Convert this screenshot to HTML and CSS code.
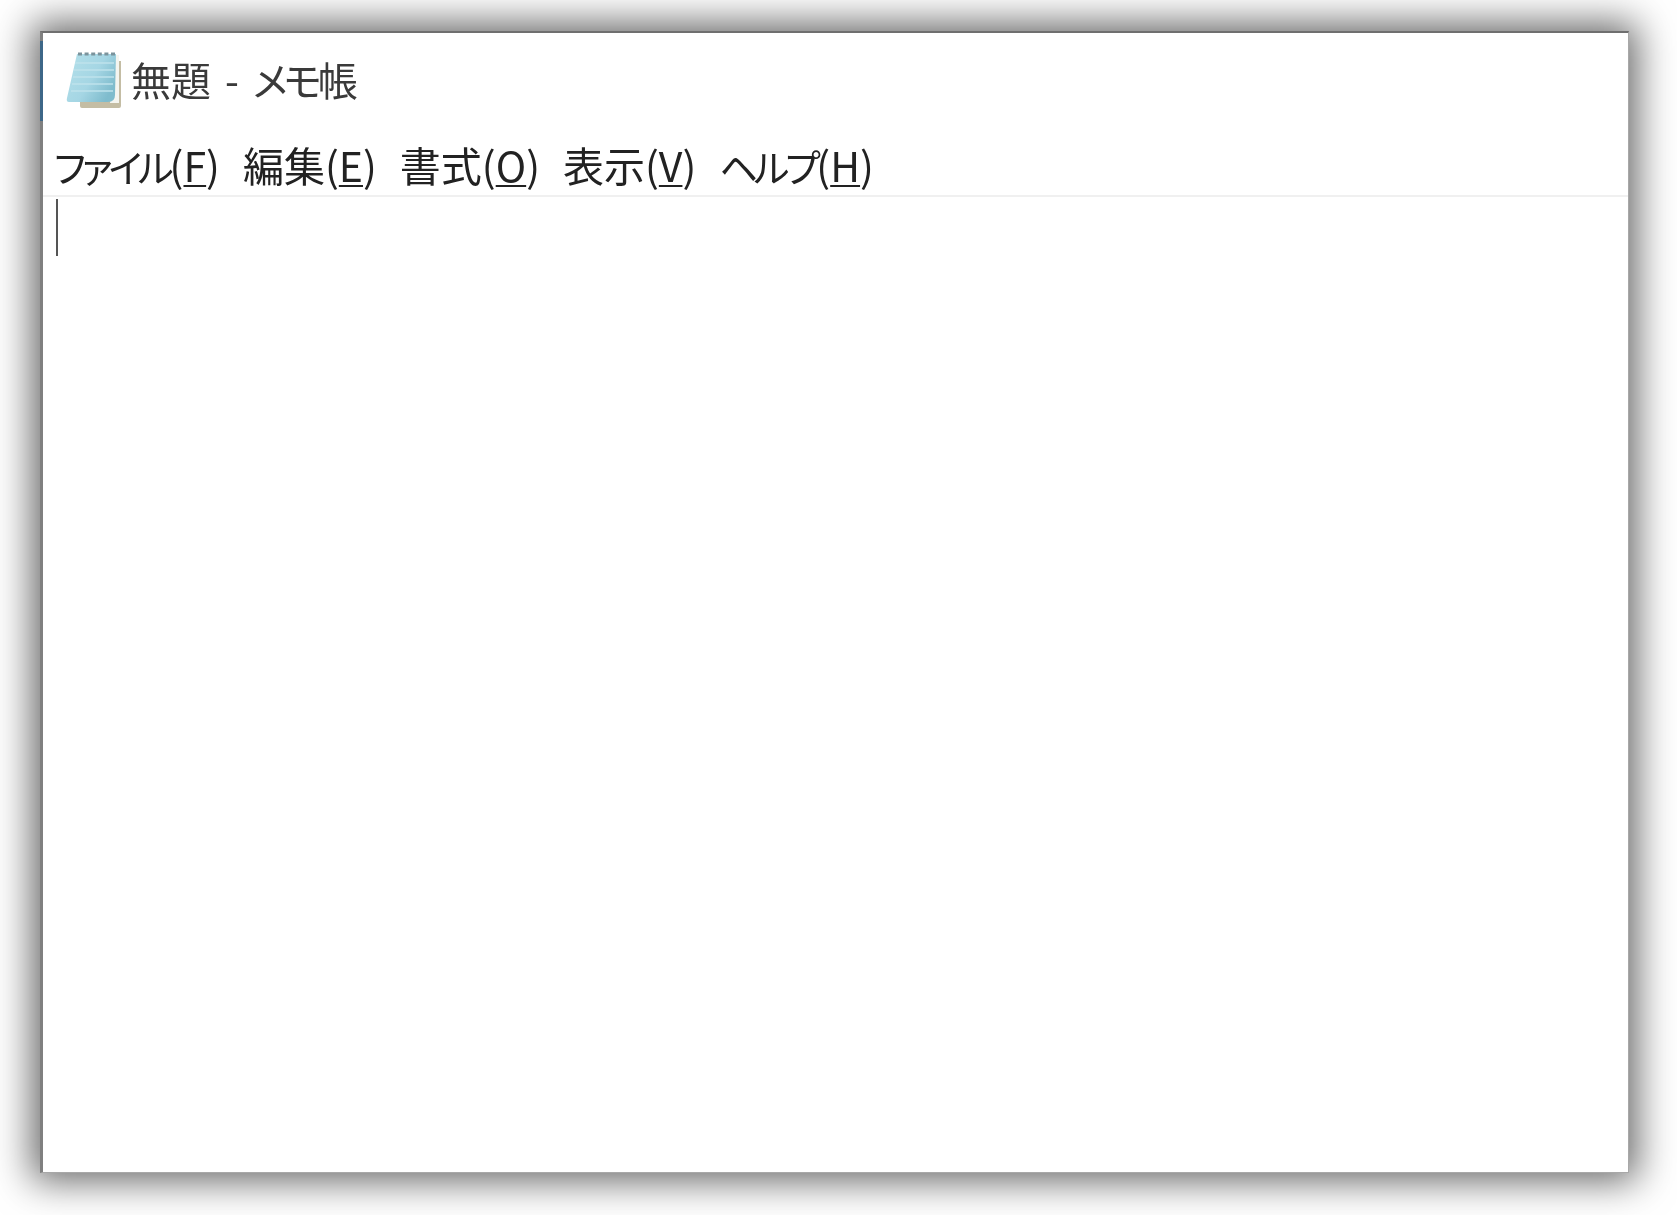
FILE: index.html
```html
<!DOCTYPE html>
<html lang="ja">
<head>
  <meta charset="UTF-8" />
  <title>無題 - メモ帳</title>
  <link rel="stylesheet" href="styles.css">
</head>
<body>
  <div class="window">
    <div class="accent"></div>

    <div class="titlebar">
      <svg class="app-icon" viewBox="0 0 56 60" aria-hidden="true">
        <defs>
          <linearGradient id="paper" x1="0" y1="0" x2="1" y2="0.6">
            <stop offset="0" stop-color="#b4e0ea" />
            <stop offset="0.6" stop-color="#a5d6e4" />
            <stop offset="1" stop-color="#7fbccd" />
          </linearGradient>
        </defs>
        <path d="M14 50 L14 57 Q14 59 16 59 L53 59 Q55 59 55 57 L55 12 L50 12 L50 50 Z" fill="#c4bda4" />
        <path d="M48 6 L53 6 L53 54 L44 54 Z" fill="#f4f5f0" />
        <path d="M11 5 L50 5 L49 46 Q49 53 42 53 L3 53 Q0 53 1 49 Z" fill="url(#paper)" />
        <path d="M9 14 H48 M8 21 H48 M7 28 H48 M6 35 H47 M5 42 H47" stroke="#bfe2eb" stroke-width="1.4" fill="none" />
        <path d="M12 5 H49" stroke="#7b939c" stroke-width="3" stroke-dasharray="4 2.6" fill="none" />
      </svg>
      <span class="title">無題 - <span class="kana">メモ</span>帳</span>
    </div>

    <nav class="menubar">
      <span class="menu-item"><span class="kana">ファイル</span>(<u>F</u>)</span>
      <span class="menu-item">編集(<u>E</u>)</span>
      <span class="menu-item">書式(<u>O</u>)</span>
      <span class="menu-item">表示(<u>V</u>)</span>
      <span class="menu-item"><span class="kana">ヘルプ</span>(<u>H</u>)</span>
    </nav>

    <div class="editor">
      <div class="caret"></div>
    </div>
  </div>
</body>
</html>
```

FILE: styles.css
```css
* {
  box-sizing: border-box;
}
body, html {
  margin: 0;
  padding: 0;
  height: 100%;
  background: #fff;
  overflow: hidden;
}
body {
  padding: 31px 48px 42px 40px;
  font-family: 'Noto Sans CJK JP', 'Liberation Sans', sans-serif;
  color: #222;
}
.window {
  position: relative;
  height: 100%;
  display: flex;
  flex-direction: column;
  background: #fff;
  border: 1px solid #a8a8a8;
  border-top: 2px solid #6f6f6f;
  border-left: 3px solid #808080;
  box-shadow: 0 0 36px 8px rgba(0, 0, 0, 0.6);
}
.accent {
  position: absolute;
  top: 8px;
  left: -3px;
  width: 3px;
  height: 80px;
  background: #3d6788;
}
.titlebar {
  height: 80px;
  flex: none;
  display: flex;
  align-items: center;
  padding: 12px 0 0 23px;
}
.app-icon {
  width: 56px;
  height: 60px;
  margin-right: 9px;
  flex: none;
  filter: blur(0.6px);
}
.title {
  font-size: 40px;
  line-height: 1;
  color: #3a3a3a;
  word-spacing: 5px;
  font-feature-settings: "palt";
  filter: blur(0.5px);
}
.title .kana {
  letter-spacing: -4px;
}
.menubar {
  height: 84px;
  flex: none;
  display: flex;
  align-items: center;
  gap: 23px;
  padding: 20px 0 0 11px;
  border-bottom: 2px solid #f0f0f0;
}
.menu-item {
  font-size: 41px;
  line-height: 1;
  color: #222;
  font-feature-settings: "palt";
  filter: blur(0.5px);
}
.menu-item .kana {
  font-size: 38px;
  letter-spacing: -4px;
}
.menu-item u {
  text-underline-offset: 3px;
  text-decoration-thickness: 2px;
}
.editor {
  flex: 1;
  padding: 2px 0 0 13px;
}
.caret {
  width: 2px;
  height: 57px;
  background: #555;
}
```
